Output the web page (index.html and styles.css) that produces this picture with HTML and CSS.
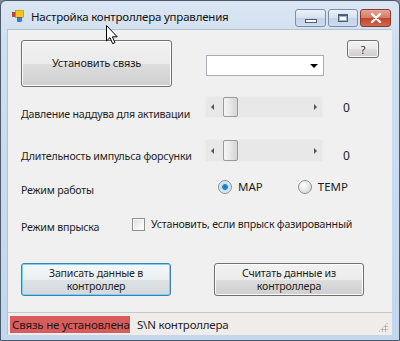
FILE: index.html
```html
<!DOCTYPE html>
<html lang="ru">
<head>
  <meta charset="UTF-8">
  <title>Настройка контроллера управления</title>
  <link rel="stylesheet" href="styles.css">
</head>
<body>
  <div class="window">
    <div class="titlebar">
      <svg class="app-icon" width="12" height="12" viewBox="0 0 12 12">
        <rect x="0.5" y="2.5" width="4" height="4" fill="#d83a2a" stroke="#8a1f14" stroke-width="0.6"/>
        <rect x="3.5" y="0.5" width="8" height="7" fill="#f5c518" stroke="#b08a00" stroke-width="0.6"/>
        <rect x="5.5" y="7.5" width="4" height="4" fill="#3f7fd6" stroke="#1f4f96" stroke-width="0.6"/>
      </svg>
      <span class="title">Настройка контроллера управления</span>
      <div class="caption-buttons">
        <div class="cap-btn"><span class="glyph-min"></span></div>
        <div class="cap-btn max"><span class="glyph-max"></span></div>
        <div class="cap-btn close">
          <svg width="12" height="10" viewBox="0 0 12 10"><path d="M2 1 L10 9 M10 1 L2 9" stroke="#fff" stroke-width="2.4" stroke-linecap="round"/></svg>
        </div>
      </div>
    </div>

    <div class="client">
      <div class="main">
        <div class="row row-connect">
          <button class="btn btn-connect">Установить связь</button>
          <div class="combo"><span class="combo-arrow"></span></div>
          <button class="btn btn-help">?</button>
        </div>

        <div class="row row-slider first">
          <span class="label">Давление наддува для активации</span>
          <div class="scroll"><span class="arrow-l"></span><span class="thumb"></span><span class="arrow-r"></span></div>
          <span class="value">0</span>
        </div>

        <div class="row row-slider second">
          <span class="label">Длительность импульса форсунки</span>
          <div class="scroll"><span class="arrow-l"></span><span class="thumb"></span><span class="arrow-r"></span></div>
          <span class="value">0</span>
        </div>

        <div class="row row-mode">
          <span class="label">Режим работы</span>
          <label class="radio checked"><span class="dot"></span>MAP</label>
          <label class="radio"><span class="dot"></span>TEMP</label>
        </div>

        <div class="row row-inject">
          <span class="label">Режим впрыска</span>
          <label class="check"><span class="box"></span>Установить, если впрыск фазированный</label>
        </div>

        <div class="row row-actions">
          <button class="btn btn-action focused">Записать данные в<br>контроллер</button>
          <button class="btn btn-action">Считать данные из<br>контроллера</button>
        </div>
      </div>

      <div class="statusbar">
        <span class="status-error">Связь не установлена</span>
        <span class="status-serial">S\N контроллера</span>
        <span class="grip"></span>
      </div>
    </div>

    <svg class="cursor" width="13" height="20" viewBox="0 0 13 20">
      <path d="M0.5 0.5 L0.5 16 L4 12.6 L6.6 18.6 L9 17.6 L6.4 11.8 L11.2 11.8 Z" fill="#fff" stroke="#000" stroke-width="1" stroke-linejoin="round"/>
    </svg>
  </div>
</body>
</html>
```

FILE: styles.css
```css
body { margin: 0; background: #7b8794; font-family: "Noto Sans", "Open Sans", sans-serif; color: #1e1e1e; }

.window { position: relative; width: 400px; height: 341px; box-sizing: border-box; padding: 0 7px 5px 6px; display: flex; flex-direction: column;
  background: linear-gradient(to bottom, #dbe6f3 0, #cfdff0 40px, #c2d6ec 100%); border: 1px solid #4b5a6c; border-radius: 6px 6px 0 0; }

.titlebar { height: 28px; display: flex; align-items: center; position: relative; }
.app-icon { margin: 2px 0 0 5px; }
.title { margin-left: 7px; font-size: 11.5px; letter-spacing: -0.2px; padding-top: 2px; color: #111; }
.caption-buttons { position: absolute; right: 1px; top: 8px; display: flex; gap: 2px; }
.cap-btn { width: 29px; height: 16px; border: 1px solid #7d8fa8; border-radius: 3px; display: flex; align-items: center; justify-content: center;
  background: linear-gradient(to bottom, #e9f0f8 0, #d6e2f0 50%, #c3d3e6 51%, #cfdcec 100%); }
.cap-btn.max { width: 28px; }
.cap-btn.close { border-color: #8a3a2c; background: linear-gradient(to bottom, #e8a493 0, #d47a66 50%, #c2442a 51%, #d0684f 100%); }
.glyph-min { width: 10px; height: 2px; background: #fff; border: 1px solid #4d5f77; margin-top: 5px; }
.glyph-max { width: 8px; height: 5px; border: 1px solid #4d5f77; border-top-width: 2px; background: #fff; box-shadow: inset 0 0 0 1px #9fb2ca; }

.client { flex: 1; background: #f0f0f0; display: flex; flex-direction: column; border: 1px solid #b4c3d3; border-bottom: none; border-right: none; }
.main { flex: 1; padding-left: 13px; }

.row { display: flex; align-items: flex-start; }
.label { font-size: 10.6px; letter-spacing: -0.2px; width: 184px; flex: none; }

.btn { font-family: inherit; font-size: 10.6px; letter-spacing: -0.2px; color: #1e1e1e; border: 1px solid #707070; border-radius: 3px; padding: 0;
  background: linear-gradient(to bottom, #f2f2f2 0, #ebebeb 50%, #dddddd 51%, #cfcfcf 100%); box-shadow: inset 0 0 0 1px #fcfcfc; }

.row-connect { margin-top: 10px; height: 47px; }
.btn-connect { width: 151px; height: 47px; font-size: 11px; padding-bottom: 3px; }
.combo { width: 118px; height: 21px; margin: 15px 0 0 34px; background: #fff; border: 1px solid #abadb3; box-sizing: border-box; position: relative; }
.combo-arrow { position: absolute; right: 5px; top: 8px; border: 4px solid transparent; border-top: 4px solid #000; border-bottom: none; }
.btn-help { width: 32px; height: 18px; margin-left: 23px; font-size: 11px; color: #333; }

.row-slider { height: 22px; }
.row-slider.first { margin-top: 9px; }
.row-slider.second { margin-top: 21px; height: 23px; }
.row-slider .label { padding-top: 11px; }
.row-slider.second .label { padding-top: 10px; }
.scroll { width: 118px; height: 100%; background: #e8e8e8; border-radius: 2px; position: relative; display: flex; align-items: center; box-shadow: inset 0 0 0 1px #ededed; }
.arrow-l { margin-left: 6px; border: 3px solid transparent; border-right: 3px solid #555; border-left: none; }
.arrow-r { margin-left: auto; margin-right: 6px; border: 3px solid transparent; border-left: 3px solid #555; border-right: none; }
.thumb { position: absolute; left: 18px; top: 1px; bottom: 1px; width: 13px; border: 1px solid #9a9a9a; border-radius: 2px;
  background: linear-gradient(to right, #f6f6f6 0, #e6e6e6 50%, #d4d4d4 100%); }
.value { font-size: 12px; margin: 3px 0 0 20px; }
.row-slider.second .value { margin-top: 8px; }

.row-mode { margin-top: 17px; height: 16px; }
.row-mode .label { padding-top: 4px; width: 184px; }
.radio { display: flex; align-items: center; font-size: 11.5px; gap: 6px; margin-left: 13px; }
.radio + .radio { margin-left: 35px; }
.radio .dot { width: 12px; height: 12px; border-radius: 50%; border: 1px solid #8e8f8f; background: radial-gradient(circle at 40% 35%, #ffffff 0, #e2e2e2 60%, #cfcfcf 100%); }
.radio.checked .dot { background: radial-gradient(circle, #1f6fb8 0, #2c8bd0 30%, #bfe0f5 38%, #f3f3f3 100%); }

.row-inject { margin-top: 22px; height: 14px; }
.row-inject .label { width: 111px; padding-top: 3px; }
.check { display: flex; align-items: center; gap: 6px; font-size: 10.6px; letter-spacing: -0.2px; }
.check .box { width: 11px; height: 11px; border: 1px solid #8e8f8f; background: linear-gradient(135deg, #dcdcdc 0, #f4f4f4 60%, #ffffff 100%); box-shadow: inset 0 0 0 1px #f8f8f8; }

.row-actions { margin-top: 32px; }
.btn-action { width: 150px; height: 33px; line-height: 13px; }
.btn-action + .btn-action { margin-left: 43px; }
.btn-action.focused { border-color: #3c7fb1; box-shadow: inset 0 0 0 1px #7dd3f7; background: linear-gradient(to bottom, #f4f8fb 0, #eceff1 50%, #dde2e5 51%, #d2d8dc 100%); }

.statusbar { height: 23px; border-top: 1px solid #c8c8c8; background: #efecea; display: flex; align-items: center; position: relative; box-sizing: border-box; }
.status-error { margin-left: 2px; background: #d95c5c; color: #1a1a1a; font-size: 11.5px; letter-spacing: -0.2px; padding: 0 2px; height: 17px; line-height: 17px; width: 116px; white-space: nowrap; }
.status-serial { margin-left: 7px; font-size: 11.5px; letter-spacing: -0.2px; white-space: nowrap; }
.grip { position: absolute; right: 4px; bottom: 3px; width: 10px; height: 10px;
  background: radial-gradient(circle, #a7a7a7 0.9px, transparent 1.2px) 0 0 / 3px 3px;
  clip-path: polygon(100% 0, 100% 100%, 0 100%); }

.cursor { position: absolute; left: 105px; top: 24px; }
```
